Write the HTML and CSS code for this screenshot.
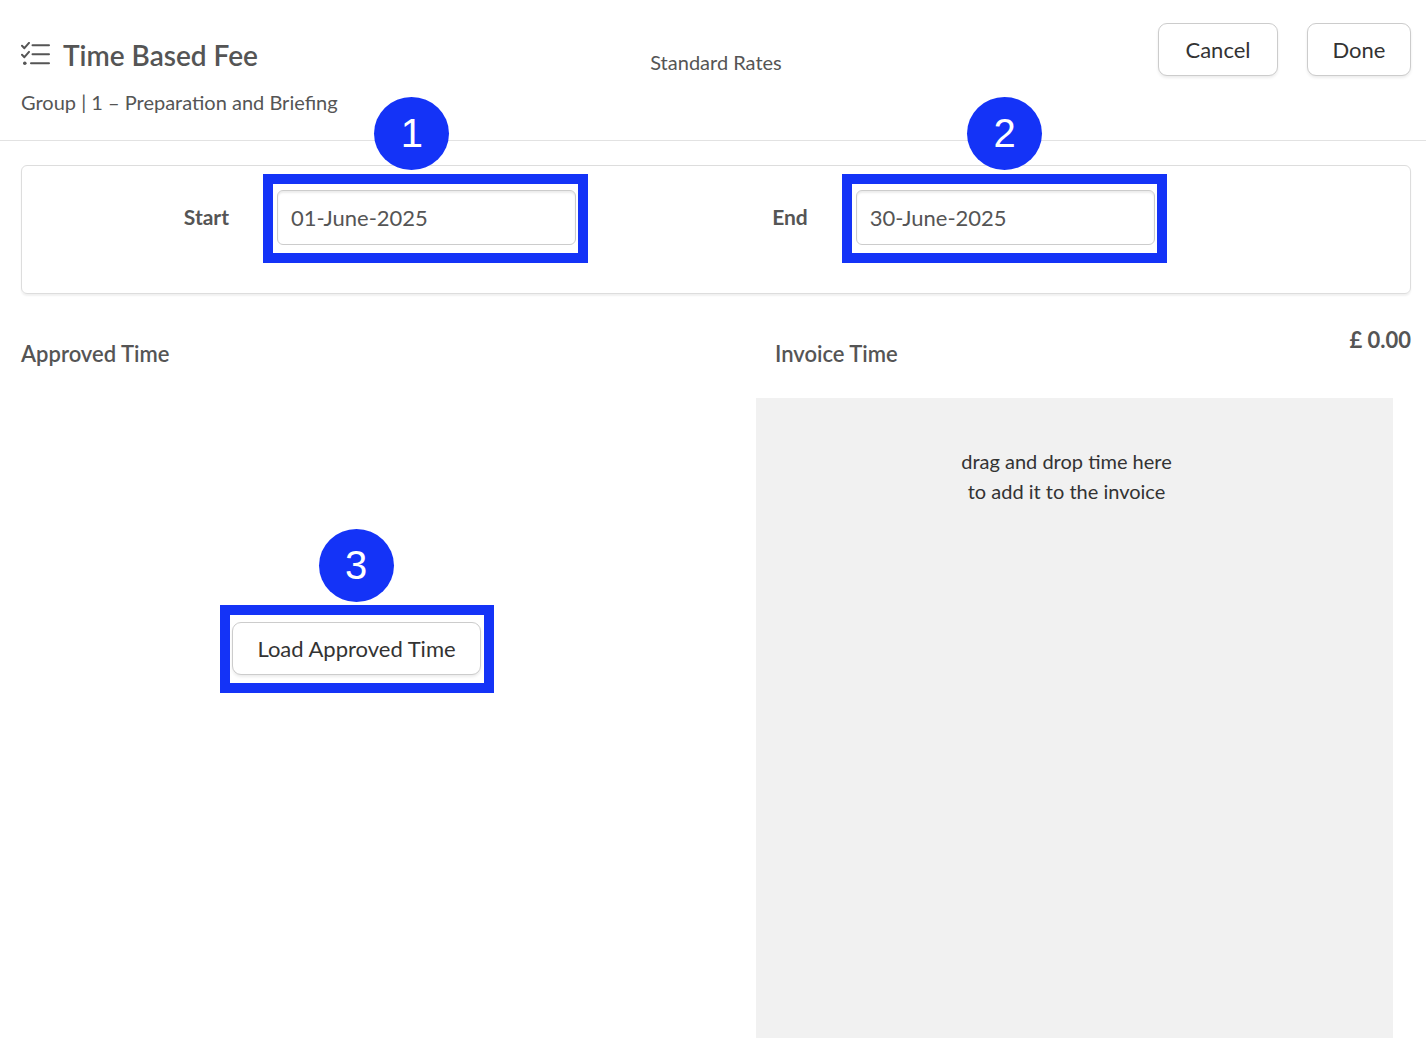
FILE: index.html
```
<!DOCTYPE html>
<html lang="en">
<head>
    <meta charset="UTF-8">
    <meta name="viewport" content="width=device-width, initial-scale=1.0">
    <title>Time Based Fee</title>
    <link rel="stylesheet" href="styles.css">
</head>
<body>
    <header class="header">
        <div class="header-title">
            <h1>
                <svg class="icon" viewBox="0 0 30 26" width="30" height="26" aria-hidden="true">
                    <path d="M1 3.8L3.4 6.2L8 0.9M1 12.8L3.4 15.2L8 9.9M11.5 3.2H28M11.5 12.2H28M10 21.2H28"/>
                    <circle cx="3.8" cy="21.2" r="1.8"/>
                </svg>
                Time Based Fee
            </h1>
            <p>Group | 1 – Preparation and Briefing</p>
        </div>
        <div class="rates">Standard Rates</div>
        <div class="header-buttons">
            <button type="button" class="btn cancel">Cancel</button>
            <button type="button" class="btn done">Done</button>
        </div>
    </header>

    <main class="main">
        <form class="dates">
            <div class="field">
                <label for="startDate">Start</label>
                <div class="field-input step">
                    <input type="text" id="startDate" value="01-June-2025">
                    <span class="step-number step-one">1</span>
                </div>
            </div>
            <div class="field">
                <label for="endDate">End</label>
                <div class="field-input step">
                    <input type="text" id="endDate" value="30-June-2025">
                    <span class="step-number">2</span>
                </div>
            </div>
        </form>

        <div class="columns">
            <section class="approved">
                <h2>Approved Time</h2>
                <div class="load">
                    <div class="step">
                        <button type="button" class="btn load-btn">Load Approved Time</button>
                        <span class="step-number">3</span>
                    </div>
                </div>
            </section>
            <section class="invoice">
                <div class="invoice-head">
                    <h2>Invoice Time</h2>
                    <span class="total">£ 0.00</span>
                </div>
                <div class="drop-zone">
                    drag and drop time here<br>
                    to add it to the invoice
                </div>
            </section>
        </div>
    </main>
</body>
</html>
```
FILE: styles.css
```
* {
    box-sizing: border-box;
}

body {
    display: flex;
    flex-direction: column;
    min-height: 100vh;
    margin: 0;
    background-color: #fff;
    color: #555;
    font-family: Lato, "Open Sans", sans-serif;
    font-size: 20px;
    line-height: 30px;
}

h1, h2, p {
    margin: 0;
}

.header {
    display: grid;
    grid-template-columns: 1fr auto 1fr;
    align-items: start;
    padding: 23px 15px 23px 21px;
    border-bottom: 1px solid #e2e2e2;
}

.header-title {
    padding-top: 12px;
}

.header-title p {
    margin-top: 12px;
}

h1 {
    display: flex;
    align-items: center;
    gap: 12px;
    font-size: 28px;
    font-weight: 600;
    line-height: 40px;
}

.icon {
    fill: none;
    stroke: #555;
    stroke-width: 2;
    stroke-linecap: round;
    stroke-linejoin: round;
}

.icon circle {
    fill: #555;
    stroke: none;
}

.rates {
    padding-top: 24px;
}

.header-buttons {
    display: flex;
    justify-content: flex-end;
    gap: 29px;
}

.btn {
    height: 53px;
    padding: 0 24px;
    border: 1px solid #ccc;
    border-radius: 9px;
    background-color: #fff;
    box-shadow: 0 2px 3px rgba(0,0,0,0.08);
    color: #333;
    font-family: inherit;
    font-size: 22px;
}

.cancel {
    min-width: 120px;
}

.done {
    min-width: 104px;
}

.main {
    flex: 1;
    display: flex;
    flex-direction: column;
    padding: 24px 15px 16px 21px;
}

.dates {
    display: flex;
    min-height: 129px;
    padding-top: 24px;
    border: 1px solid #ddd;
    border-radius: 6px;
    box-shadow: 0 2px 2px rgba(0,0,0,0.06);
}

.field {
    display: flex;
    align-items: flex-start;
    gap: 48px;
    width: 41.7%;
    padding-right: 25px;
}

.field label {
    flex: 0 0 207px;
    font-size: 21px;
    line-height: 54px;
    font-weight: bold;
    text-align: right;
}

.field-input {
    flex: 1;
}

.field-input input {
    display: block;
    width: 100%;
    height: 55px;
    padding: 0 13px;
    border: 1px solid #ccc;
    border-radius: 6px;
    box-shadow: inset 0 2px 2px rgba(0,0,0,0.08);
    color: #555;
    font-family: inherit;
    font-size: 22px;
}

/* Numbered frames drawn over the controls */
.step {
    position: relative;
}

.step::after {
    content: "";
    position: absolute;
    inset: -16px -12px -18px -14px;
    border: 10px solid #1433f7;
    pointer-events: none;
}

.load .step::after {
    inset: -17px -13px -18px -12px;
}

.step-number {
    position: absolute;
    bottom: calc(100% + 20px);
    left: calc(50% - 38px);
    width: 75px;
    height: 73px;
    border-radius: 50%;
    background-color: #1433f7;
    color: #fff;
    font-family: "Liberation Sans", sans-serif;
    font-size: 40px;
    line-height: 72px;
    text-align: center;
}

.step-one {
    left: calc(50% - 52px);
}

.columns {
    flex: 1;
    display: grid;
    grid-template-columns: 1fr 1fr;
    gap: 48px;
    padding-top: 45px;
}

h2 {
    font-size: 22px;
    font-weight: 600;
    line-height: 30px;
}

.load {
    display: flex;
    justify-content: center;
    padding-top: 253px;
}

.load-btn {
    display: block;
    min-width: 249px;
}

.invoice {
    display: flex;
    flex-direction: column;
}

.invoice-head {
    display: flex;
    justify-content: space-between;
    padding-left: 35px;
}

.total {
    margin-top: -14px;
    font-size: 22px;
    font-weight: bold;
}

.drop-zone {
    flex: 1;
    margin: 29px 18px 0 16px;
    padding: 48px 16px 48px 0;
    background-color: #f1f1f1;
    color: #333;
    text-align: center;
}
```
